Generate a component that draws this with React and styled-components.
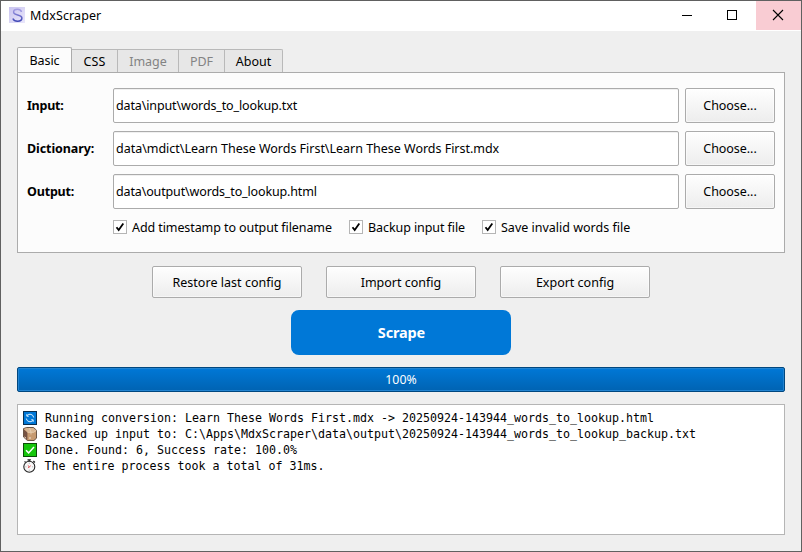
import React from 'react';
import styled, { createGlobalStyle, css } from 'styled-components';

const GlobalStyle = createGlobalStyle`
  * { box-sizing: border-box; }
  body { margin: 0; background: #efefef; }
  button { margin: 0; padding: 0; font: inherit; color: inherit; }
`;

const Window = styled.main`
  width: 802px;
  height: 552px;
  border: 1px solid #606060;
  background: #efefef;
  color: #000;
  font-family: 'Noto Sans', 'Open Sans', sans-serif;
  font-size: 12.5px;
  line-height: 18px;
  display: flex;
  flex-direction: column;
  overflow: hidden;
`;

const TitleBar = styled.header`
  height: 30px;
  flex: none;
  background: #fff;
  display: flex;
  align-items: flex-start;
`;

const AppIcon = styled.svg`
  width: 16px;
  height: 16px;
  margin: 6px 5px 0 8px;
`;

const Label = styled.span`
  white-space: pre;
  letter-spacing: ${(p) => p.$spacing || 0}px;
`;

const Title = styled.h1`
  margin: 6px auto 0 0;
  font-size: 12.5px;
  font-weight: 400;
  line-height: 18px;
`;

const WindowButton = styled.button`
  width: 45px;
  height: 29px;
  border: 0;
  background: ${(p) => (p.$close ? '#f9ccd3' : 'transparent')};
  svg { display: block; width: 45px; height: 29px; }
`;

const Content = styled.div`
  padding: 16px 16px 0;
  display: flex;
  flex-direction: column;
`;

const Tabs = styled.nav`
  display: flex;
  align-items: flex-end;
  height: 26px;
  margin-bottom: -1px;
`;

const Tab = styled.button`
  width: ${(p) => p.$width}px;
  height: 24px;
  border: 1px solid #b9b9b9;
  border-left: 0;
  border-bottom-color: #ababab;
  background: #e7e7e7;
  border-radius: 0 ${(p) => (p.$last ? 2 : 0)}px 0 0;
  color: ${(p) => (p.disabled ? '#838383' : '#000')};
  padding-top: 1px;
  ${(p) => p.$active && css`
    height: 26px;
    border: 1px solid #ababab;
    border-bottom: 0;
    border-radius: 2px 2px 0 0;
    background: #fcfcfc;
    padding-bottom: 0;
  `}
`;

const Panel = styled.section`
  height: 181px;
  border: 1px solid #ababab;
  background: #fcfcfc;
  padding: 15px 9px 0;
  display: flex;
  flex-direction: column;
  gap: 8px;
`;

const Field = styled.div`
  display: grid;
  grid-template-columns: 80px 566px 90px;
  column-gap: 6px;
  height: 35px;
  align-items: center;
`;

const FieldLabel = styled.label`
  font-weight: 700;
`;

const PathInput = styled.div`
  height: 35px;
  border: 1px solid #ababab;
  border-radius: 2px;
  background: #fff;
  box-shadow: inset 0 1px #f0f0f0;
  padding: 8px 2px 0;
`;

const Button = styled.button`
  width: ${(p) => p.$width}px;
  height: ${(p) => p.$height}px;
  border: 1px solid #ababab;
  border-radius: 2px;
  background: linear-gradient(#fefefe, #ededed);
  box-shadow: inset 0 0 0 1px rgba(255, 255, 255, 0.5);
`;

const ConfigButton = styled(Button)`
  padding-top: 1px;
`;

const Checks = styled.div`
  display: flex;
  margin: 1px 0 0 86px;
`;

const Check = styled.label`
  width: ${(p) => p.$width}px;
  height: 20px;
  display: flex;
  align-items: center;
  gap: 5px;
`;

const CheckBox = styled.svg`
  width: 14px;
  height: 14px;
  flex: none;
  margin-bottom: 2px;
`;

const ConfigActions = styled.div`
  display: flex;
  justify-content: center;
  gap: 24px;
  margin-top: 13px;
`;

const ScrapeButton = styled.button`
  width: 220px;
  height: 45px;
  margin: 12px auto 0;
  border: 0;
  border-radius: 8px;
  background: #0078d7;
  color: #fff;
  font-size: 14.5px;
  font-weight: 700;
  padding: 0 0 2px 1px;
`;

const Progress = styled.div`
  height: 25px;
  margin-top: 12px;
  border: 1px solid #00477f;
  border-radius: 2px;
  background: linear-gradient(#0078d7, #0063b2);
  box-shadow: inset 0 0 0 1px #2283d0;
  color: #fff;
  text-align: center;
  line-height: 24px;
  font-size: 12.3px;
`;

const Log = styled.section`
  height: 131px;
  margin-top: 12px;
  border: 1px solid #b5b5b5;
  background: #fff;
  padding: 5px;
  font-family: 'DejaVu Sans Mono', monospace;
  font-size: 11.63px;
`;

const LogRow = styled.div`
  height: 16px;
  line-height: 16px;
  display: flex;
  align-items: center;
`;

const LogIcon = styled.svg`
  width: 14px;
  height: 14px;
  flex: none;
  margin-right: ${(p) => p.$gap || 8}px;
`;

const tabs = [
  { text: 'Basic', width: 55, active: true, ls: -0.05 },
  { text: 'CSS', width: 46, ls: 0.1 },
  { text: 'Image', width: 61, disabled: true, ls: 0 },
  { text: 'PDF', width: 46, disabled: true, ls: 0 },
  { text: 'About', width: 58, last: true, ls: 0 },
];

const fields = [
  { label: 'Input:', ll: -0.25, value: 'data\\input\\words_to_lookup.txt', ls: -0.13 },
  { label: 'Dictionary:', ll: -0.09, value: 'data\\mdict\\Learn These Words First\\Learn These Words First.mdx', ls: -0.02 },
  { label: 'Output:', ll: -0.18, value: 'data\\output\\words_to_lookup.html', ls: -0.14 },
];

const checks = [
  { text: 'Add timestamp to output filename', width: 236, ls: -0.09 },
  { text: 'Backup input file', width: 133, ls: -0.08 },
  { text: 'Save invalid words file', width: 160, ls: 0 },
];

const actions = [
  { text: 'Restore last config', ls: 0.03 },
  { text: 'Import config', ls: 0 },
  { text: 'Export config', ls: 0 },
];

const RefreshIcon = () => (
  <LogIcon viewBox="0 0 14 14">
    <rect x="0.5" y="0.5" width="13" height="13" fill="#0078d7" stroke="#092f50" />
    <path d="M4 4.6a3.8 3.8 0 0 1 6.7 1.9M10 9.4a3.8 3.8 0 0 1-6.7-1.9M3.8 3.2v2H5.8M10.2 10.8v-2H8.2" fill="none" stroke="#d8efff" strokeWidth="1" />
  </LogIcon>
);

const BoxIcon = () => (
  <LogIcon viewBox="0 0 14 14">
    <path d="M.5 1.6 3.6.5h6.9l3 2.7v8L11 13.5H4.4L.5 10z" fill="#c69a70" stroke="#4b382c" strokeWidth=".8" />
    <path d="M.9 2.4l3.5 2.9V13L.9 9.7z" fill="#755242" />
    <path d="M1 2 3.8.9H10l3.3 2.6-2.6 1.8H4.5z" fill="#d8b793" />
    <path d="M6.4 1 8 5.2v2.3M4.5 5.3h6.2l2.6-1.8" fill="none" stroke="#ead3b8" strokeWidth=".8" />
    <path d="M1.6 10l1.4 1.2M6 11h2" stroke="#efe3d6" />
  </LogIcon>
);

const DoneIcon = () => (
  <LogIcon viewBox="0 0 14 14">
    <rect x="0.5" y="0.5" width="13" height="13" fill="#16c60c" stroke="#0b4d08" />
    <path d="m3 7.3 2.6 2.6L11 4" fill="none" stroke="#fff" strokeWidth="1.5" />
  </LogIcon>
);

const ClockIcon = () => (
  <LogIcon viewBox="0 0 14 14" $gap={7.5}>
    <path d="M4.5.8h3.4M6.2.8v2M10.4 2l1.5 1.4M1.6 3.2l.9-.8" stroke="#222" strokeWidth="1.3" />
    <circle cx="6.3" cy="7.7" r="5.5" fill="#f7f7f7" stroke="#222" strokeWidth="1.1" />
    <path d="M6.3 3.8v.8M6.3 10.8v.8M2.5 7.8h.8M9.3 7.8h.8" stroke="#888" strokeWidth=".8" />
    <path d="m4.8 6.4 1.5 1.4-1.2 1.3M6.3 7.8l1.4-1" fill="none" stroke="#d7353b" strokeWidth=".9" />
  </LogIcon>
);

const logs = [
  { Icon: RefreshIcon, text: 'Running conversion: Learn These Words First.mdx -> 20250924-143944_words_to_lookup.html' },
  { Icon: BoxIcon, text: 'Backed up input to: C:\\Apps\\MdxScraper\\data\\output\\20250924-143944_words_to_lookup_backup.txt' },
  { Icon: DoneIcon, text: 'Done. Found: 6, Success rate: 100.0%' },
  { Icon: ClockIcon, text: 'The entire process took a total of 31ms.' },
];

export default function App() {
  return (
    <>
      <GlobalStyle />
      <Window>
        <TitleBar>
          <AppIcon viewBox="0 0 16 16">
            <defs>
              <linearGradient id="tile" x2="1" y2="1">
                <stop stopColor="#c9c4ef" />
                <stop offset="1" stopColor="#eae7fb" />
              </linearGradient>
              <linearGradient id="mark" x2="0" y2="1">
                <stop stopColor="#a59de4" />
                <stop offset="1" stopColor="#3f47b5" />
              </linearGradient>
            </defs>
            <rect width="16" height="16" fill="url(#tile)" />
            <path d="M12.6 4.8C11.8 3 10.2 2.3 8.5 2.3 6 2.3 4.6 3.4 4.6 5c0 3.8 8.3 2.2 8.3 6 0 2-1.8 3.2-4.3 3.2-2.4 0-4-.9-4.7-2.8" fill="none" stroke="url(#mark)" strokeWidth="1.5" />
          </AppIcon>
          <Title><Label $spacing={0.1}>MdxScraper</Label></Title>
          <WindowButton aria-label="Minimize">
            <svg viewBox="0 0 45 29"><path d="M16 14.5h10" stroke="#000" /></svg>
          </WindowButton>
          <WindowButton aria-label="Maximize">
            <svg viewBox="0 0 45 29"><rect x="16.5" y="9.5" width="9" height="9" fill="none" stroke="#000" /></svg>
          </WindowButton>
          <WindowButton $close aria-label="Close">
            <svg viewBox="0 0 45 29"><path d="m17 9 10 10M27 9 17 19" stroke="#000" strokeWidth="1.1" /></svg>
          </WindowButton>
        </TitleBar>
        <Content>
          <Tabs>
            {tabs.map((t) => (
              <Tab key={t.text} $width={t.width} $active={t.active} $last={t.last} disabled={t.disabled}>
                <Label $spacing={t.ls}>{t.text}</Label>
              </Tab>
            ))}
          </Tabs>
          <Panel>
            {fields.map((f) => (
              <Field key={f.label}>
                <FieldLabel><Label $spacing={f.ll}>{f.label}</Label></FieldLabel>
                <PathInput><Label $spacing={f.ls}>{f.value}</Label></PathInput>
                <Button $width={90} $height={35}><Label $spacing={-0.05}>Choose...</Label></Button>
              </Field>
            ))}
            <Checks>
              {checks.map((c) => (
                <Check key={c.text} $width={c.width}>
                  <CheckBox viewBox="0 0 14 14">
                    <rect x="0.5" y="0.5" width="13" height="13" fill="#fff" stroke="#b5b5b5" />
                    <path d="m3.5 7.3 2.2 2.8L10.3 3.6" fill="none" stroke="#000" strokeWidth="1.8" />
                  </CheckBox>
                  <Label $spacing={c.ls}>{c.text}</Label>
                </Check>
              ))}
            </Checks>
          </Panel>
          <ConfigActions>
            {actions.map((a) => (
              <ConfigButton key={a.text} $width={150} $height={32}><Label $spacing={a.ls}>{a.text}</Label></ConfigButton>
            ))}
          </ConfigActions>
          <ScrapeButton><Label $spacing={-0.15}>Scrape</Label></ScrapeButton>
          <Progress><Label>100%</Label></Progress>
          <Log>
            {logs.map(({ Icon, text }) => (
              <LogRow key={text}><Icon /><Label>{text}</Label></LogRow>
            ))}
          </Log>
        </Content>
      </Window>
    </>
  );
}
